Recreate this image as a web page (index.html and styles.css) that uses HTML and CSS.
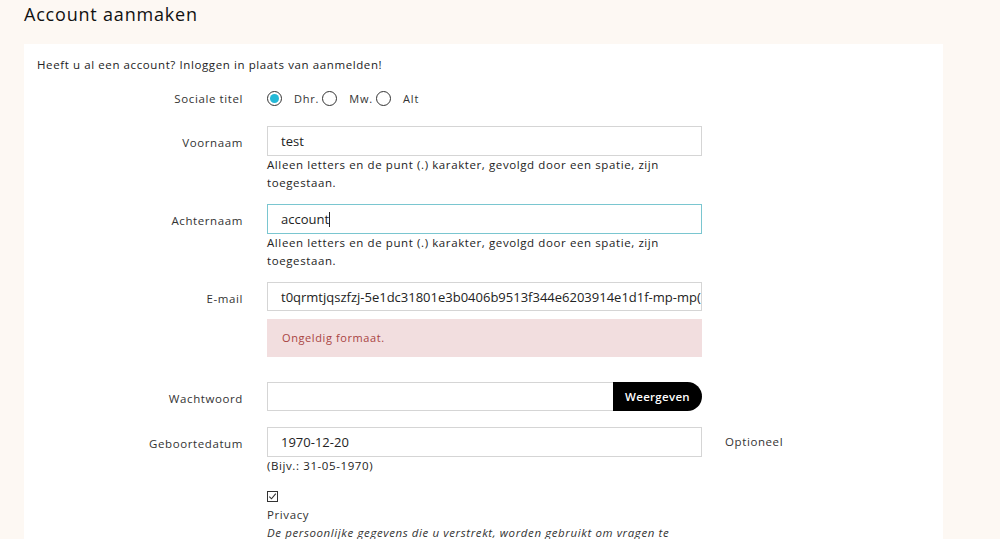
FILE: index.html
```html
<!DOCTYPE html>
<html lang="nl">
<head>
    <meta charset="UTF-8">
    <title>Account aanmaken</title>
    <link rel="stylesheet" href="styles.css">
</head>
<body>
    <h1 class="page-title">Account aanmaken</h1>

    <section class="card">
        <p class="login-hint">Heeft u al een account? Inloggen in plaats van aanmelden!</p>

        <form class="register-form">
            <!-- Sociale titel -->
            <div class="form-row row-radio">
                <label class="form-label">Sociale titel</label>
                <div class="form-field radios">
                    <label class="radio"><span class="radio-dot checked"></span>Dhr.</label>
                    <label class="radio"><span class="radio-dot"></span>Mw.</label>
                    <label class="radio"><span class="radio-dot"></span>Alt</label>
                </div>
            </div>

            <div class="form-row">
                <label class="form-label">Voornaam</label>
                <div class="form-field">
                    <div class="input">test</div>
                    <p class="help">Alleen letters en de punt (.) karakter, gevolgd door een spatie, zijn toegestaan.</p>
                </div>
            </div>

            <div class="form-row">
                <label class="form-label">Achternaam</label>
                <div class="form-field">
                    <div class="input focused">account<span class="caret"></span></div>
                    <p class="help">Alleen letters en de punt (.) karakter, gevolgd door een spatie, zijn toegestaan.</p>
                </div>
            </div>

            <div class="form-row">
                <label class="form-label">E-mail</label>
                <div class="form-field">
                    <div class="input clip">t0qrmtjqszfzj-5e1dc31801e3b0406b9513f344e6203914e1d1f-mp-mp(</div>
                    <div class="alert">Ongeldig formaat.</div>
                </div>
            </div>

            <div class="form-row row-password">
                <label class="form-label">Wachtwoord</label>
                <div class="form-field input-group">
                    <div class="input grow"></div>
                    <button type="button" class="btn-show">Weergeven</button>
                </div>
            </div>

            <div class="form-row">
                <label class="form-label">Geboortedatum</label>
                <div class="form-field">
                    <div class="input">1970-12-20</div>
                    <p class="help">(Bijv.: 31-05-1970)</p>
                </div>
                <span class="form-extra">Optioneel</span>
            </div>

            <div class="form-row row-check">
                <span class="form-label"></span>
                <div class="form-field">
                    <span class="checkbox">
                        <svg width="11" height="11" viewBox="0 0 11 11"><rect x="0.5" y="0.5" width="10" height="10" fill="#fff" stroke="#333"/><path d="M2.3 5.6 L4.5 7.8 L8.8 2.6" fill="none" stroke="#333" stroke-width="1.1"/></svg>
                    </span>
                    <p class="check-label">Privacy</p>
                    <p class="check-text">De persoonlijke gegevens die u verstrekt, worden gebruikt om vragen te beantwoorden en verzoeken te verwerken.</p>
                </div>
            </div>
        </form>
    </section>
</body>
</html>
```

FILE: styles.css
```css
* { margin: 0; padding: 0; box-sizing: border-box; }
body {
    font-family: "Open Sans", "DejaVu Sans", sans-serif;
    background: #fdf8f3;
    color: #232323;
    padding: 0 24px;
    overflow: hidden;
    letter-spacing: 0.6px;
}
.page-title { font-size: 18px; font-weight: 500; color: #111; line-height: 28px; margin-bottom: 16px; letter-spacing: 0.8px; }

/* Card */
.card { background: #fff; width: 919px; padding: 13px 13px 40px; min-height: 600px; }
.login-hint { font-size: 11.5px; line-height: 16px; color: #232323; margin-bottom: 16px; }

/* Rows */
.form-row { display: grid; grid-template-columns: 206px 435px auto; column-gap: 24px; align-items: start; margin-bottom: 12px; font-size: 11.5px; }
.form-label { text-align: right; line-height: 30px; padding-top: 2px; color: #333; }
.form-extra { line-height: 30px; color: #333; margin-left: -1px; }
.row-radio { margin-bottom: 17px; }
.row-radio .form-label { line-height: 20px; padding-top: 0; }
.radios { display: flex; align-items: center; height: 18px; }
.radio { display: flex; align-items: center; gap: 12px; margin-right: 3px; color: #333; font-size: 11px; letter-spacing: 0.8px; }
.radio-dot { width: 15px; height: 15px; border: 1px solid #333; border-radius: 50%; display: inline-block; position: relative; }
.radio-dot.checked::after { content: ""; position: absolute; inset: 2px; border-radius: 50%; background: #24b9d7; }

/* Inputs */
.input { height: 30px; border: 1px solid #d5d5d5; padding: 0 13px; line-height: 28px; font-size: 13px; letter-spacing: 0; color: #232323; background: #fff; white-space: nowrap; }
.input.focused { border-color: #7ac6d0; }
.input.clip { overflow: hidden; height: 29px; }
.caret { display: inline-block; width: 1px; height: 15px; background: #222; vertical-align: -3px; }
.help { font-size: 11.5px; line-height: 18px; color: #232323; }
.alert { margin-top: 8px; height: 38px; background: #f2dedf; color: #a94442; font-size: 11px; line-height: 38px; padding-left: 15px; margin-bottom: 13px; }
.row-password { margin-bottom: 13px; }
.input-group { display: flex; }
.input.grow { flex: 1; border-right: none; height: 29px; }
.btn-show { width: 89px; height: 29px; border: none; background: #000; color: #fff; font-family: inherit; font-size: 11.5px; font-weight: 600; border-radius: 0 15px 15px 0; letter-spacing: 0.3px; }

/* Privacy */
.row-check { padding-top: 2px; }
.checkbox { display: block; height: 16px; padding-top: 1px; }
.check-label { font-size: 11.5px; line-height: 18px; margin-top: 1px; color: #333; }
.check-text { font-size: 11.5px; line-height: 18px; font-style: italic; color: #333; }
```
